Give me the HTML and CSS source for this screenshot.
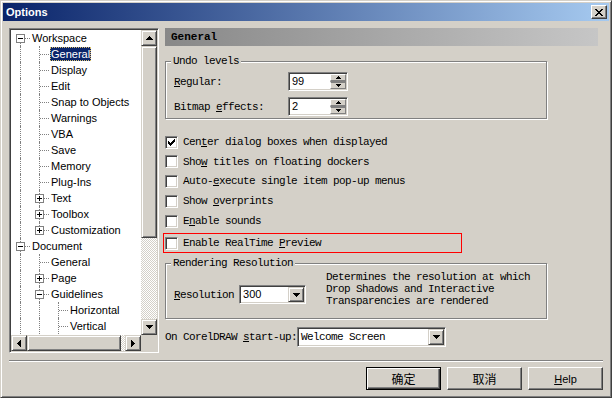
FILE: index.html
```html
<!DOCTYPE html>
<html lang="en">
<head>
  <meta charset="UTF-8" />
  <title>Options</title>
  <link rel="stylesheet" href="styles.css">
</head>
<body>
  <div class="window">
    <div class="titlebar">
      <span class="title">Options</span>
      <span class="close">
        <svg width="8" height="7" viewBox="0 0 8 7"><path d="M0 0h2v1H0zM6 0h2v1H6zM1 1h2v1H1zM5 1h2v1H5zM2 2h4v1H2zM3 3h2v1H3zM2 4h4v1H2zM1 5h2v1H1zM5 5h2v1H5zM0 6h2v1H0zM6 6h2v1H6z"/></svg>
      </span>
    </div>

    <div class="content">
      <div class="main">
        <!-- category tree -->
        <div class="tree">
          <ul class="tree-list">
            <li class="row"><i class="c ex first"><b class="box"></b></i><span class="lbl">Workspace</span></li>
            <li class="row"><i class="c v"></i><i class="c t"></i><span class="lbl sel">General</span></li>
            <li class="row"><i class="c v"></i><i class="c t"></i><span class="lbl">Display</span></li>
            <li class="row"><i class="c v"></i><i class="c t"></i><span class="lbl">Edit</span></li>
            <li class="row"><i class="c v"></i><i class="c t"></i><span class="lbl">Snap to Objects</span></li>
            <li class="row"><i class="c v"></i><i class="c t"></i><span class="lbl">Warnings</span></li>
            <li class="row"><i class="c v"></i><i class="c t"></i><span class="lbl">VBA</span></li>
            <li class="row"><i class="c v"></i><i class="c t"></i><span class="lbl">Save</span></li>
            <li class="row"><i class="c v"></i><i class="c t"></i><span class="lbl">Memory</span></li>
            <li class="row"><i class="c v"></i><i class="c t"></i><span class="lbl">Plug-Ins</span></li>
            <li class="row"><i class="c v"></i><i class="c ex"><b class="box plus"></b></i><span class="lbl">Text</span></li>
            <li class="row"><i class="c v"></i><i class="c ex"><b class="box plus"></b></i><span class="lbl">Toolbox</span></li>
            <li class="row"><i class="c v"></i><i class="c ex last"><b class="box plus"></b></i><span class="lbl">Customization</span></li>
            <li class="row"><i class="c ex"><b class="box"></b></i><span class="lbl">Document</span></li>
            <li class="row"><i class="c v"></i><i class="c t"></i><span class="lbl">General</span></li>
            <li class="row"><i class="c v"></i><i class="c ex"><b class="box plus"></b></i><span class="lbl">Page</span></li>
            <li class="row"><i class="c v"></i><i class="c ex"><b class="box"></b></i><span class="lbl">Guidelines</span></li>
            <li class="row"><i class="c v"></i><i class="c v"></i><i class="c t"></i><span class="lbl">Horizontal</span></li>
            <li class="row"><i class="c v"></i><i class="c v"></i><i class="c t"></i><span class="lbl">Vertical</span></li>
          </ul>

          <div class="vscroll">
            <span class="sb-btn"><svg width="7" height="4" viewBox="0 0 7 4"><path d="M3 0H4V1H5V2H6V3H7V4H0V3H1V2H2V1H3Z"/></svg></span>
            <span class="thumb v-thumb"></span>
            <span class="track"></span>
            <span class="sb-btn"><svg width="7" height="4" viewBox="0 0 7 4"><path d="M0 0H7V1H6V2H5V3H4V4H3V3H2V2H1V1H0Z"/></svg></span>
          </div>
          <div class="hscroll">
            <span class="sb-btn"><svg width="4" height="7" viewBox="0 0 4 7"><path d="M3 0H4V7H3V6H2V5H1V4H0V3H1V2H2V1H3Z"/></svg></span>
            <span class="thumb h-thumb"></span>
            <span class="track"></span>
            <span class="sb-btn"><svg width="4" height="7" viewBox="0 0 4 7"><path d="M0 0H1V1H2V2H3V3H4V4H3V5H2V6H1V7H0Z"/></svg></span>
          </div>
          <div class="corner"></div>
        </div>

        <!-- settings page -->
        <div class="panel">
          <div class="panel-head">General</div>

          <fieldset class="group undo">
            <legend>Undo levels</legend>
            <div class="field-row">
              <label class="field-label"><u>R</u>egular:</label>
              <div class="spin">
                <span class="val">99</span>
                <span class="spin-btns">
                  <span class="spin-btn"><svg width="5" height="3" viewBox="0 0 5 3"><path d="M2 0H3V1H4V2H5V3H0V2H1V1H2Z"/></svg></span>
                  <span class="spin-btn"><svg width="5" height="3" viewBox="0 0 5 3"><path d="M0 0H5V1H4V2H3V3H2V2H1V1H0Z"/></svg></span>
                </span>
              </div>
            </div>
            <div class="field-row">
              <label class="field-label">Bitmap <u>e</u>ffects:</label>
              <div class="spin">
                <span class="val">2</span>
                <span class="spin-btns">
                  <span class="spin-btn"><svg width="5" height="3" viewBox="0 0 5 3"><path d="M2 0H3V1H4V2H5V3H0V2H1V1H2Z"/></svg></span>
                  <span class="spin-btn"><svg width="5" height="3" viewBox="0 0 5 3"><path d="M0 0H5V1H4V2H3V3H2V2H1V1H0Z"/></svg></span>
                </span>
              </div>
            </div>
          </fieldset>

          <div class="checks">
            <div class="check-row">
              <span class="check"><svg width="7" height="7" viewBox="0 0 7 7"><path d="M6 0H7V3H6V4H5V5H4V6H3V7H2V6H1V5H0V2H1V3H2V4H3V3H4V2H5V1H6Z"/></svg></span>
              <span>Cen<u>t</u>er dialog boxes when displayed</span>
            </div>
            <div class="check-row short">
              <span class="check"></span>
              <span>Sho<u>w</u> titles on floating dockers</span>
            </div>
            <div class="check-row">
              <span class="check"></span>
              <span>Auto-<u>e</u>xecute single item pop-up menus</span>
            </div>
            <div class="check-row">
              <span class="check"></span>
              <span>Show <u>o</u>verprints</span>
            </div>
            <div class="check-row">
              <span class="check"></span>
              <span>E<u>n</u>able sounds</span>
            </div>
            <div class="check-row marked">
              <span class="check"></span>
              <span>Enable RealTime <u>P</u>review</span>
            </div>
          </div>

          <fieldset class="group render">
            <legend>Rendering Resolution</legend>
            <div class="res-row">
              <div class="res-field">
                <label class="res-label"><u>R</u>esolution</label>
                <div class="combo res-combo">
                  <span class="val">300</span>
                  <span class="drop"><svg width="7" height="4" viewBox="0 0 7 4"><path d="M0 0H7V1H6V2H5V3H4V4H3V3H2V2H1V1H0Z"/></svg></span>
                </div>
              </div>
              <p class="res-desc">Determines the resolution at which<br>Drop Shadows and Interactive<br>Transparencies are rendered</p>
            </div>
          </fieldset>

          <div class="startup">
            <label>On CorelDRAW <u>s</u>tart-up:</label>
            <div class="combo start-combo">
              <span class="val mono">Welcome Screen</span>
              <span class="drop"><svg width="7" height="4" viewBox="0 0 7 4"><path d="M0 0H7V1H6V2H5V3H4V4H3V3H2V2H1V1H0Z"/></svg></span>
            </div>
          </div>
        </div>
      </div>

      <div class="sep"></div>

      <div class="buttons">
        <button class="btn default">确定</button>
        <button class="btn cjk">取消</button>
        <button class="btn"><u>H</u>elp</button>
      </div>
    </div>
  </div>
</body>
</html>
```

FILE: styles.css
```css
:root {
  --face: #d4d0c8;
  --shadow: #808080;
  --dark: #404040;
  --light: #fff;
  --navy: #0a246a;
}

* {
  margin: 0;
  padding: 0;
  box-sizing: border-box;
}

html, body {
  background: var(--face);
}

body {
  font-family: "Liberation Mono", "DejaVu Sans Mono", monospace;
  font-size: 11px;
  letter-spacing: -0.6px;
  color: #000;
}

u {
  text-decoration: underline;
  text-underline-offset: 1px;
}

svg {
  display: block;
  fill: #000;
  shape-rendering: crispEdges;
}

.window {
  width: 612px;
  height: 398px;
  padding: 2px;
  border: 1px solid;
  border-color: var(--face) var(--dark) var(--dark) var(--face);
  box-shadow: inset 1px 1px var(--light), inset -1px -1px var(--shadow);
}

/* title bar */
.titlebar {
  height: 18px;
  display: flex;
  align-items: center;
  justify-content: space-between;
  padding: 0 2px;
  background: linear-gradient(to right, var(--navy), #a6caf0);
}

.title {
  font-family: "Liberation Sans", Arial, sans-serif;
  font-size: 11px;
  font-weight: bold;
  letter-spacing: 0;
  color: #fff;
  padding-left: 1px;
}

.close {
  width: 16px;
  height: 14px;
  display: flex;
  align-items: center;
  justify-content: center;
  background: var(--face);
  border: 1px solid;
  border-color: var(--light) var(--dark) var(--dark) var(--light);
  box-shadow: inset -1px -1px var(--shadow);
  padding-right: 1px;
}

.content {
  padding: 7px 6px 0 6px;
}

.main {
  display: flex;
  gap: 6px;
  height: 325px;
}

/* tree */
.tree {
  width: 150px;
  flex: none;
  display: grid;
  grid-template-columns: 1fr 16px;
  grid-template-rows: 1fr 16px;
  border: 1px solid;
  border-color: var(--shadow) var(--light) var(--light) var(--shadow);
  padding: 1px;
  box-shadow: inset 1px 1px var(--dark), inset -1px -1px var(--face);
}

.tree-list {
  list-style: none;
  background: #fff;
  overflow: hidden;
  font-family: "Liberation Sans", Arial, sans-serif;
  font-size: 11px;
  letter-spacing: 0;
}

.row {
  display: flex;
  align-items: center;
  height: 16px;
}

.c {
  position: relative;
  flex: none;
  width: 19px;
  height: 16px;
}

.v::before,
.t::before,
.ex::before {
  content: '';
  position: absolute;
  left: 9px;
  top: 0;
  height: 16px;
  border-left: 1px dotted var(--shadow);
}

.ex.first::before {
  top: 8px;
  height: 8px;
}

.ex.last::before {
  height: 8px;
}

.t::after,
.ex::after {
  content: '';
  position: absolute;
  left: 10px;
  top: 8px;
  width: 9px;
  border-top: 1px dotted var(--shadow);
}

.box {
  position: absolute;
  left: 5px;
  top: 4px;
  width: 9px;
  height: 9px;
  border: 1px solid var(--shadow);
  background: #fff;
  z-index: 1;
}

.box::before {
  content: '';
  position: absolute;
  left: 1px;
  top: 3px;
  width: 5px;
  height: 1px;
  background: #000;
}

.box.plus::after {
  content: '';
  position: absolute;
  left: 3px;
  top: 1px;
  width: 1px;
  height: 5px;
  background: #000;
}

.lbl {
  margin-left: 1px;
  padding: 0 1px;
  line-height: 14px;
  white-space: nowrap;
}

.lbl.sel {
  background: var(--navy);
  color: #fff;
  outline: 1px dotted #d8c070;
  outline-offset: -1px;
}

/* scrollbars */
.vscroll {
  display: flex;
  flex-direction: column;
}

.hscroll {
  display: flex;
}

.sb-btn {
  width: 16px;
  height: 16px;
  flex: none;
  display: flex;
  align-items: center;
  justify-content: center;
  background: var(--face);
  border: 1px solid;
  border-color: var(--face) var(--dark) var(--dark) var(--face);
  box-shadow: inset 1px 1px var(--light), inset -1px -1px var(--shadow);
}

.thumb {
  flex: none;
  background: var(--face);
  border: 1px solid;
  border-color: var(--face) var(--dark) var(--dark) var(--face);
  box-shadow: inset 1px 1px var(--light), inset -1px -1px var(--shadow);
}

.v-thumb {
  height: 192px;
}

.h-thumb {
  width: 94px;
}

.track {
  flex: 1;
  background: repeating-conic-gradient(var(--face) 0 25%, #fff 0 50%) 0 0 / 2px 2px;
}

.corner {
  background: var(--face);
}

/* settings panel */
.panel {
  flex: 1;
  margin-right: 5px;
  display: flex;
  flex-direction: column;
}

.panel-head {
  height: 18px;
  line-height: 18px;
  padding-left: 6px;
  font-weight: bold;
  letter-spacing: 0;
  background: linear-gradient(to right, #888, #c6c6c6);
}

.group {
  width: 382px;
  min-width: 0;
  border: 1px solid var(--shadow);
  box-shadow: inset 1px 1px var(--light), 1px 1px var(--light);
  padding: 5px 8px 2px 8px;
}

.group legend {
  margin-left: -3px;
  padding: 0 2px;
  line-height: 12px;
  background: var(--face);
}

.undo {
  margin-top: 9px;
}

.field-row {
  display: flex;
  align-items: center;
  height: 19px;
}

.field-row + .field-row {
  margin-top: 6px;
}

.field-label {
  width: 114px;
}

.spin,
.combo {
  display: flex;
  height: 19px;
  background: #fff;
  border: 1px solid;
  border-color: var(--shadow) var(--light) var(--light) var(--shadow);
  padding: 1px;
  box-shadow: inset 1px 1px var(--dark), inset -1px -1px var(--face);
}

.spin {
  width: 60px;
}

.val {
  flex: 1;
  padding-left: 2px;
  line-height: 15px;
  font-family: "Liberation Sans", Arial, sans-serif;
  letter-spacing: 0;
}

.val.mono {
  font-family: "Liberation Mono", "DejaVu Sans Mono", monospace;
  letter-spacing: -0.6px;
}

.spin-btns {
  width: 16px;
  display: flex;
  flex-direction: column;
}

.spin-btn {
  flex: 1;
  display: flex;
  align-items: center;
  justify-content: center;
  background: var(--face);
  border: 1px solid;
  border-color: var(--light) var(--shadow) var(--shadow) var(--light);
}

.spin-btn + .spin-btn {
  border-top: 2px solid var(--shadow);
}

.drop {
  width: 16px;
  display: flex;
  align-items: center;
  justify-content: center;
  background: var(--face);
  border: 1px solid;
  border-color: var(--face) var(--dark) var(--dark) var(--face);
  box-shadow: inset 1px 1px var(--light), inset -1px -1px var(--shadow);
}

/* checkboxes */
.checks {
  margin-top: 13px;
}

.check-row {
  display: flex;
  align-items: center;
  height: 20px;
  white-space: nowrap;
}

.check-row.short {
  height: 19px;
}

.check-row.marked {
  margin: 2px 0 0 -2px;
  width: 299px;
  padding-left: 1px;
  border: 1px solid #f00;
}

.check {
  width: 13px;
  height: 13px;
  flex: none;
  display: flex;
  align-items: center;
  justify-content: center;
  margin-right: 5px;
  background: #fff;
  border: 1px solid;
  border-color: var(--shadow) var(--light) var(--light) var(--shadow);
  box-shadow: inset 1px 1px var(--dark), inset -1px -1px var(--face);
}

/* rendering resolution */
.render {
  margin-top: 4px;
  padding: 2px 8px 11px 8px;
}

.res-row {
  display: flex;
}

.res-field {
  display: flex;
  align-items: center;
  margin-top: 14px;
  height: 19px;
}

.res-label {
  margin-right: 5px;
}

.res-combo {
  width: 67px;
}

.res-desc {
  margin-left: 20px;
  line-height: 12px;
  white-space: nowrap;
}

.startup {
  display: flex;
  align-items: center;
  margin-top: 8px;
  white-space: nowrap;
}

.start-combo {
  width: 149px;
  height: 20px;
}

.start-combo .val {
  line-height: 16px;
}

/* footer */
.sep {
  margin-top: 7px;
  border-top: 1px solid var(--shadow);
  border-bottom: 1px solid var(--light);
}

.buttons {
  display: flex;
  justify-content: flex-end;
  gap: 6px;
  margin-top: 5px;
}

.btn {
  width: 75px;
  height: 23px;
  background: var(--face);
  border: 1px solid;
  border-color: var(--light) var(--dark) var(--dark) var(--light);
  box-shadow: inset -1px -1px var(--shadow);
  font-family: "Liberation Sans", "Noto Sans CJK SC", sans-serif;
  font-size: 11px;
  letter-spacing: 0;
  color: #000;
}

.btn.default {
  border-color: #000;
  box-shadow: inset 1px 1px var(--light), inset -1px -1px var(--dark), inset -2px -2px var(--shadow);
}

.btn.default,
.btn.cjk {
  font-size: 12px;
}
```
